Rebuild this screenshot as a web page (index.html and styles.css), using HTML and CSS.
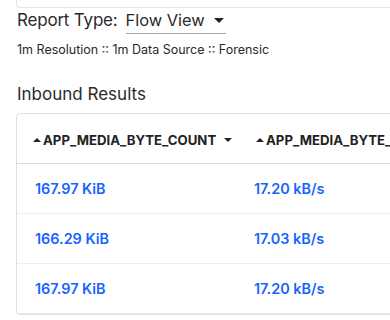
FILE: index.html
```html
<!DOCTYPE html>
<html>
<head>
<meta charset="utf-8">
<link rel="stylesheet" href="styles.css">
</head>
<body>
<div class="page">
  <div class="top-box"></div>
  <div class="report-row">
    <span class="report-label">Report Type:</span>
    <div class="select">
      <span>Flow View</span>
      <svg class="caret" width="10" height="6" viewBox="0 0 10 6"><path d="M0 0h10L5 5z" fill="#222"/></svg>
    </div>
  </div>
  <div class="meta">1m Resolution :: 1m Data Source :: Forensic</div>
  <h2 class="section-title">Inbound Results</h2>
  <div class="card">
    <table class="results">
      <colgroup><col class="c1"><col class="c2"></colgroup>
      <thead>
        <tr>
          <th><span class="th-inner"><span class="tri-up"></span>APP_MEDIA_BYTE_COUNT<span class="tri-down"></span></span></th>
          <th><span class="th-inner"><span class="tri-up"></span>APP_MEDIA_BYTE_RATE</span></th>
        </tr>
      </thead>
      <tbody>
        <tr><td>167.97 KiB</td><td>17.20 kB/s</td></tr>
        <tr><td>166.29 KiB</td><td>17.03 kB/s</td></tr>
        <tr><td>167.97 KiB</td><td>17.20 kB/s</td></tr>
      </tbody>
    </table>
  </div>
</div>
</body>
</html>
```
FILE: styles.css
```css
html, body {
  margin: 0;
  padding: 0;
  overflow: hidden;
  background: #fff;
}
body {
  font-family: Inter, "Noto Sans", sans-serif;
  color: #2a2a2e;
}
.page {
  padding-left: 16px;
  width: 420px;
}
.top-box {
  height: 7px;
  border: 1px solid #e2e2ea;
  border-top: none;
  border-radius: 0 0 0 4px;
  margin-right: -20px;
}
.report-row {
  display: flex;
  align-items: flex-start;
  margin-top: 1px;
  font-size: 17px;
  line-height: 22px;
  padding-left: 1px;
  white-space: nowrap;
}
.report-label {
  margin-right: 8px;
  letter-spacing: -0.2px;
}
.select {
  display: flex;
  align-items: center;
  gap: 9px;
  height: 22px;
  padding-right: 2px;
  padding-bottom: 2px;
  border-bottom: 1px solid #a8a8b0;
  font-size: 16.4px;
}
.caret {
  margin-top: 1px;
}
.meta {
  font-size: 12.5px;
  margin-top: 8px;
  padding-left: 1px;
  line-height: 16px;
  white-space: nowrap;
}
.section-title {
  font-size: 17px;
  font-weight: 400;
  margin: 0;
  margin-top: 25px;
  line-height: 22px;
  padding-left: 1px;
}
.card {
  margin-top: 8px;
  border: 1px solid #dedee8;
  border-radius: 4px;
  overflow: hidden;
  width: 500px;
}
.results {
  border-collapse: collapse;
  table-layout: fixed;
  width: 100%;
}
.c1 { width: 219px; }
.results th {
  height: 49px;
  padding: 0 0 0 16px;
  text-align: left;
  font-size: 13.2px;
  font-weight: 700;
  color: #222;
  border-bottom: 1px solid #dcdce6;
  white-space: nowrap;
}
.th-inner {
  display: inline-flex;
  align-items: center;
}
.tri-up {
  width: 0;
  height: 0;
  border-left: 4px solid transparent;
  border-right: 4px solid transparent;
  border-bottom: 4px solid #222;
  margin-right: 2px;
}
.tri-down {
  width: 0;
  height: 0;
  border-left: 4px solid transparent;
  border-right: 4px solid transparent;
  border-top: 4px solid #222;
  margin-left: 8px;
}
.results td {
  height: 50px;
  box-sizing: border-box;
  padding: 0 0 0 18px;
  font-size: 14.4px;
  font-weight: 600;
  color: #1763ff;
  border-bottom: 1px solid #ececf2;
  white-space: nowrap;
}
.results th:nth-child(2) {
  padding-left: 20px;
}
```
